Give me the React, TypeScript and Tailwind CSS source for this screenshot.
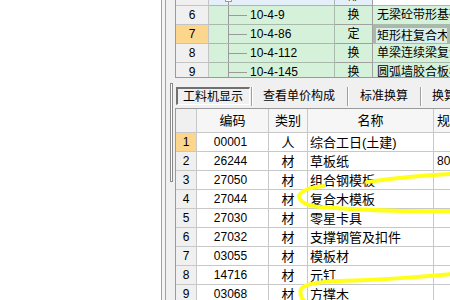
import React from 'react';

const FONT = "font-['Liberation_Sans','Noto_Sans_CJK_SC',sans-serif]";

const TOP_ROWS = [
  { n: '5', code: '', type: '部', name: '', partial: true },
  { n: '6', code: '10-4-9', type: '换', name: '无梁砼带形基础复合木模板' },
  { n: '7', code: '10-4-86', type: '定', name: '矩形柱复合木模板', selected: true },
  { n: '8', code: '10-4-112', type: '换', name: '单梁连续梁复合木模板' },
  { n: '9', code: '10-4-145', type: '换', name: '圆弧墙胶合板模板' },
];

const MATERIALS = [
  { code: '00001', type: '人', name: '综合工日(土建)', spec: '' },
  { code: '26244', type: '材', name: '草板纸', spec: '80#' },
  { code: '27050', type: '材', name: '组合钢模板', spec: '' },
  { code: '27044', type: '材', name: '复合木模板', spec: '' },
  { code: '27030', type: '材', name: '零星卡具', spec: '' },
  { code: '27032', type: '材', name: '支撑钢管及扣件', spec: '' },
  { code: '03055', type: '材', name: '模板材', spec: '' },
  { code: '14716', type: '材', name: '元钉', spec: '' },
  { code: '03068', type: '材', name: '方撑木', spec: '' },
];

const TABS = [
  { label: '查看单价构成', cls: 'pl-[10px] pr-[11px]' },
  { label: '标准换算', cls: 'pl-[11px] pr-[11px]' },
  { label: '换算信息', cls: 'pl-[10px] pr-[4px]' },
];

export default function App() {
  return (
    <div className={`relative flex h-[300px] w-[450px] overflow-hidden bg-white text-[12px] leading-none text-black ${FONT}`}>
      <div className="w-[161px] shrink-0 bg-white" />
      <div className="w-[5px] shrink-0 border-x border-[#a0a0a0] bg-[#f4f4f4]" />
      <div className="w-[9px] shrink-0 bg-[#f0f0f0] pl-[4px] pt-[83px]">
        <div className="h-[99px] w-[3px] border border-[#8a8a8a] bg-white" />
      </div>

      <div className="flex w-[275px] shrink-0 flex-col bg-[#f0f0f0]">
        <TopTable />
        <TabBar />
        <MaterialTable />
      </div>

      <svg className="pointer-events-none absolute inset-0" width="450" height="300" viewBox="0 0 450 300" fill="none">
        <g stroke="#ffff1a" strokeWidth="4" strokeLinecap="round" strokeLinejoin="round">
          <path d="M452 174 Q410 176 367 182" />
          <path d="M324 186 Q302 188 299 196 Q300 205 320 207 Q385 212 452 211" />
          <path d="M452 274 Q400 279 340 281 Q306 282 301 289 Q299 295 304 301" />
        </g>
      </svg>
    </div>
  );
}

function TopTable() {
  return (
    <div className="h-[78px] shrink-0 overflow-hidden border-b border-l border-[#9a9a9a]">
      <div className="-mt-[13px]">
        {TOP_ROWS.map((row) => (
          <div key={row.n} className="grid h-[19px] grid-cols-[33px_126px_38px_1fr]">
            <div
              className={`flex items-center justify-center border-b border-r border-[#c4c4c4] ${
                row.selected ? 'bg-[#fdd68e]' : 'bg-[#f0f0f0]'
              }`}
            >
              {row.n}
            </div>
            <div className={`relative flex items-center border-b border-r border-[#a9b9ab] ${row.partial ? 'bg-[#e4eff9]' : 'bg-[#d6f1da]'}`}>
              <div className="absolute bottom-0 left-[19px] top-0 w-px bg-[#9a9a9a]" />
              {row.partial ? (
                <div className="absolute bottom-[3px] left-[16px] h-[7px] w-[7px] border border-[#9a9a9a] bg-white" />
              ) : (
                <>
                  <div className="absolute left-[19px] top-[9px] h-px w-[19px] bg-[#9a9a9a]" />
                  <span className="pl-[41px]">{row.code}</span>
                </>
              )}
            </div>
            <div className={`flex items-center justify-center border-b border-r border-[#a0a0a0] ${row.partial ? 'bg-[#e4eff9]' : 'bg-[#d6f1da]'}`}>
              {row.type}
            </div>
            <div
              className={`flex items-center overflow-hidden whitespace-nowrap border-b border-[#a9b9ab] ${
                row.partial ? 'bg-white' : row.selected ? 'border-[3px] border-[#7f7f7f] bg-[#d9eee6] pl-[1px]' : 'bg-[#d6f1da] pl-[4px]'
              }`}
            >
              {row.name}
            </div>
          </div>
        ))}
      </div>
    </div>
  );
}

function TabBar() {
  return (
    <div className="flex h-[30px] shrink-0 items-start overflow-hidden whitespace-nowrap pt-[9px]">
      <div className="ml-[1px] flex h-[18px] w-[74px] shrink-0 items-center border-l-2 border-t-2 border-b border-r border-[#707070] border-b-white border-r-white pl-[5px] text-[12px]">
        工料机显示
      </div>
      <Separator />
      {TABS.map((tab, i) => (
        <React.Fragment key={tab.label}>
          <div className={`flex h-[18px] shrink-0 items-center ${tab.cls}`}>{tab.label}</div>
          {i < TABS.length - 1 ? <Separator /> : null}
        </React.Fragment>
      ))}
    </div>
  );
}

function Separator() {
  return <div className="ml-[1px] h-[19px] w-[2px] shrink-0 border-l border-r border-l-[#a0a0a0] border-r-white" />;
}

function MaterialTable() {
  const cell = 'flex items-center overflow-hidden whitespace-nowrap border-b border-r border-[#c8c8c8]';
  return (
    <div className="flex-1 overflow-hidden border-l border-t border-[#9a9a9a] bg-white">
      <div className="grid h-[24px] grid-cols-[21px_72px_39px_126px_40px] bg-[#f6f6f6] text-[13px]">
        <div className={`${cell} bg-[#f0f0f0]`} />
        <div className={`${cell} justify-center`}>编码</div>
        <div className={`${cell} justify-center`}>类别</div>
        <div className={`${cell} justify-center`}>名称</div>
        <div className={`${cell} pl-[3px]`}>规格</div>
      </div>
      {MATERIALS.map((m, i) => (
        <div key={m.code} className="grid h-[19px] grid-cols-[21px_72px_39px_126px_40px]">
          <div className={`${cell} justify-center ${i === 0 ? 'bg-[#fdd68e]' : 'bg-[#f0f0f0]'}`}>{i + 1}</div>
          <div className={`${cell} justify-center pr-[4px]`}>{m.code}</div>
          <div className={`${cell} justify-center text-[13px]`}>{m.type}</div>
          <div className={`${cell} pl-[2px] text-[13px]`}>{m.name}</div>
          <div className={`${cell} pl-[3px]`}>{m.spec}</div>
        </div>
      ))}
    </div>
  );
}
